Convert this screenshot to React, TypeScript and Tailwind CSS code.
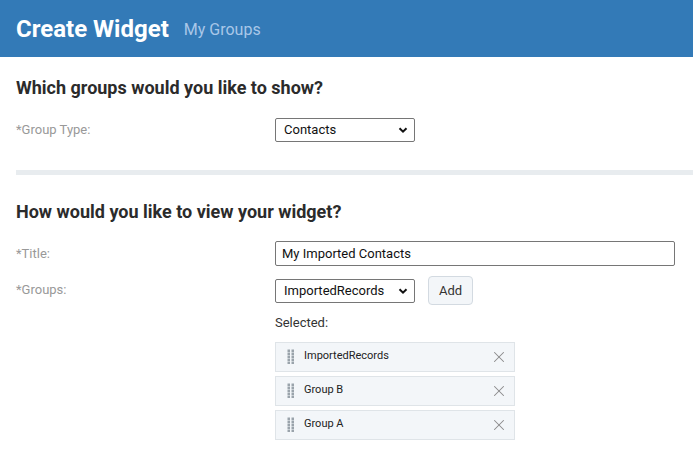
import { X } from "lucide-react";

const selected = ["ImportedRecords", "Group B", "Group A"];

function Grip() {
  return (
    <svg width="8" height="16" viewBox="0 0 8 16" className="shrink-0">
      {[0, 1, 2, 3, 4].map((r) =>
        [0, 1].map((c) => (
          <rect key={`${r}-${c}`} x={c * 4 + 0.5} y={r * 3 + 0.5} width="2.5" height="2.5" fill="#9aa3ab" />
        ))
      )}
    </svg>
  );
}

function Chevron() {
  return (
    <svg width="10" height="10" viewBox="0 0 10 10" className="pointer-events-none absolute right-[6px] top-1/2 -translate-y-1/2">
      <path d="M1.5 3.2 L5 6.7 L8.5 3.2" fill="none" stroke="#111" strokeWidth="2" />
    </svg>
  );
}

function FakeSelect({ value }: { value: string }) {
  return (
    <div className="relative w-[140px] h-[24px] border border-[#767676] rounded-[2px] bg-white flex items-center pl-[8px] text-[13px] text-[#111]">
      {value}
      <Chevron />
    </div>
  );
}

export default function App() {
  return (
    <div className="min-h-screen bg-white font-['Roboto',sans-serif] text-[#333]">
      <div className="h-[57px] bg-[#337ab7] flex items-center px-[16px] gap-[15px]">
        <h1 className="text-[24px] font-bold text-white leading-none">Create Widget</h1>
        <span className="text-[16px] text-[#a9c7e8] mt-[3px]">My Groups</span>
      </div>

      <div className="pl-[16px]">
        <h2 className="text-[18px] font-bold text-[#2b2b2b] pt-[20px] leading-[22px]">
          Which groups would you like to show?
        </h2>
        <div className="flex items-center mt-[19px]">
          <label className="w-[259px] text-[13px] text-[#999]">*Group Type:</label>
          <FakeSelect value="Contacts" />
        </div>

        <div className="h-[5px] bg-[#e8ecef] mt-[28px]" />

        <h2 className="text-[18px] font-bold text-[#2b2b2b] pt-[26px] leading-[22px]">
          How would you like to view your widget?
        </h2>

        <div className="flex items-center mt-[18px]">
          <label className="w-[259px] text-[13px] text-[#999]">*Title:</label>
          <div className="w-[400px] h-[25px] border border-[#767676] rounded-[2px] flex items-center pl-[6px] text-[13px] text-[#111]">
            My Imported Contacts
          </div>
        </div>

        <div className="flex items-start mt-[10px]">
          <label className="w-[259px] text-[13px] text-[#999] mt-[4px]">*Groups:</label>
          <div className="flex flex-col">
            <div className="flex items-center gap-[13px]">
              <FakeSelect value="ImportedRecords" />
              <button className="h-[29px] px-[10px] border border-[#d3dae1] rounded-[4px] bg-[#f3f6f9] text-[13px] text-[#333]">
                Add
              </button>
            </div>
            <div className="text-[13px] text-[#333] mt-[8px]">Selected:</div>
            <div className="flex flex-col gap-[4px] mt-[9px]">
              {selected.map((s) => (
                <div
                  key={s}
                  className="w-[240px] h-[30px] bg-[#f3f6f9] border border-[#dfe4e8] flex items-center pl-[11px] pr-[6px]"
                >
                  <Grip />
                  <span className="ml-[9px] text-[11px] text-[#222] flex-1">{s}</span>
                  <X size={18} strokeWidth={1.4} color="#8a8a8a" />
                </div>
              ))}
            </div>
          </div>
        </div>
      </div>
    </div>
  );
}
